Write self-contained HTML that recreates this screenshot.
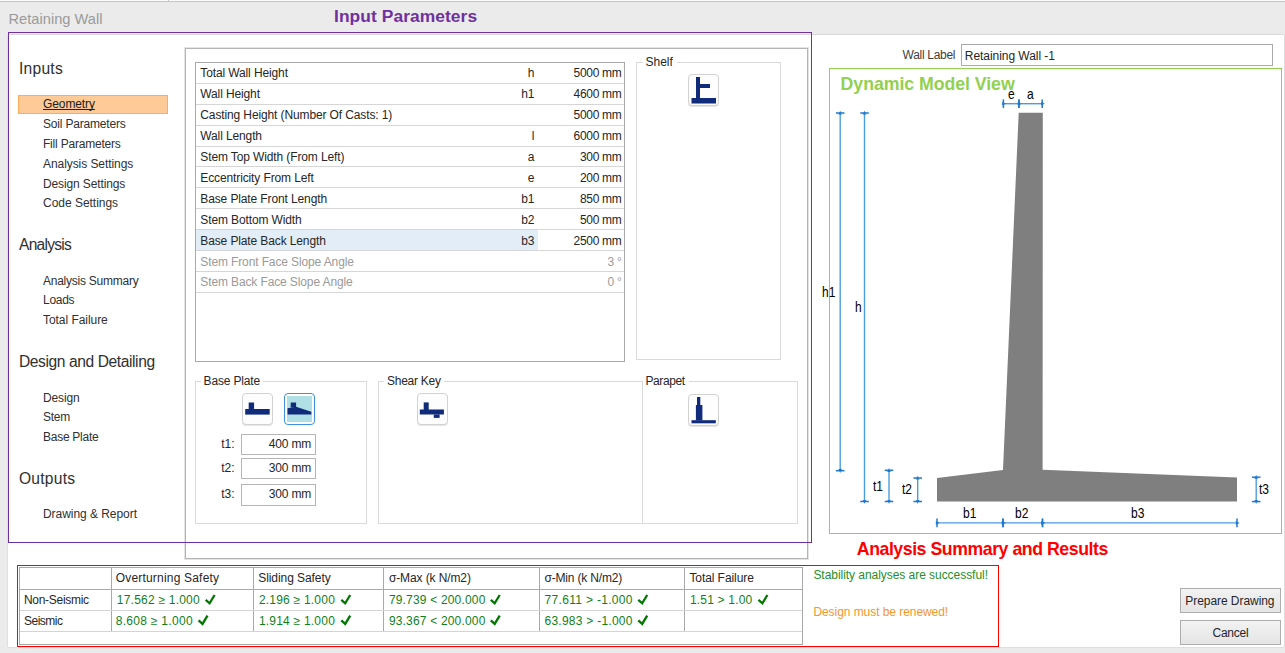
<!DOCTYPE html>
<html><head><meta charset="utf-8"><title>Retaining Wall</title>
<style>
html,body{margin:0;padding:0;}
body{width:1285px;height:653px;position:relative;overflow:hidden;background:#fff;font-family:"Liberation Sans", sans-serif;}
</style></head><body>
<div style="position:absolute;left:0px;top:0px;width:1285px;height:1px;background:#fbfbfb"></div>
<div style="position:absolute;left:0px;top:1px;width:1285px;height:1px;background:#c6c6c6"></div>
<div style="position:absolute;left:168px;top:0px;width:1px;height:1px;background:#c6c6c6"></div>
<div style="position:absolute;left:0px;top:2px;width:1285px;height:33px;background:#ebebeb"></div>
<div style="position:absolute;left:8px;top:34px;width:1276px;height:1px;background:#d9d9d9"></div>
<div style="position:absolute;left:0px;top:35px;width:8px;height:618px;background:#ebebeb"></div>
<div style="position:absolute;left:7px;top:35px;width:1px;height:612px;background:#e0e0e0"></div>
<div style="position:absolute;left:0px;top:647px;width:1285px;height:6px;background:#ebebeb"></div>
<div style="position:absolute;left:8px;top:647px;width:1276px;height:1px;background:#dedede"></div>
<div style="position:absolute;left:1284px;top:35px;width:1px;height:612px;background:#dcdcdc"></div>
<div style="position:absolute;left:8.50px;top:12px;font-size:14.6px;line-height:1;color:#9a9a9a;font-weight:400;white-space:pre;letter-spacing:0.038px;">Retaining Wall</div>
<div style="position:absolute;left:334.00px;top:8px;font-size:17.4px;line-height:1;color:#7030a0;font-weight:700;white-space:pre;letter-spacing:0.067px;">Input Parameters</div>
<div style="position:absolute;left:8px;top:32px;width:804px;height:511px;border:1px solid #7030a0;box-sizing:border-box;z-index:5"></div>
<div style="position:absolute;left:19.00px;top:61px;font-size:15.6px;line-height:1;color:#303030;font-weight:400;white-space:pre;letter-spacing:0.240px;">Inputs</div>
<div style="position:absolute;left:18px;top:95px;width:150px;height:19px;background:#fecb98;border:1px solid #ffac5a;box-sizing:border-box"></div>
<div style="position:absolute;left:43.00px;top:98px;font-size:12px;line-height:1;color:#202020;font-weight:400;white-space:pre;letter-spacing:-0.100px;text-decoration:underline;text-underline-offset:1px;text-decoration-skip-ink:none">Geometry</div>
<div style="position:absolute;left:43.00px;top:118px;font-size:12px;line-height:1;color:#303030;font-weight:400;white-space:pre;letter-spacing:-0.186px;">Soil Parameters</div>
<div style="position:absolute;left:43.00px;top:138px;font-size:12px;line-height:1;color:#303030;font-weight:400;white-space:pre;letter-spacing:-0.207px;">Fill Parameters</div>
<div style="position:absolute;left:43.00px;top:158px;font-size:12px;line-height:1;color:#303030;font-weight:400;white-space:pre;letter-spacing:-0.069px;">Analysis Settings</div>
<div style="position:absolute;left:43.00px;top:178px;font-size:12px;line-height:1;color:#303030;font-weight:400;white-space:pre;letter-spacing:-0.121px;">Design Settings</div>
<div style="position:absolute;left:43.00px;top:197px;font-size:12px;line-height:1;color:#303030;font-weight:400;white-space:pre;letter-spacing:-0.025px;">Code Settings</div>
<div style="position:absolute;left:19.00px;top:237px;font-size:15.6px;line-height:1;color:#303030;font-weight:400;white-space:pre;letter-spacing:-0.757px;">Analysis</div>
<div style="position:absolute;left:43.00px;top:275px;font-size:12px;line-height:1;color:#303030;font-weight:400;white-space:pre;letter-spacing:-0.247px;">Analysis Summary</div>
<div style="position:absolute;left:43.00px;top:294px;font-size:12px;line-height:1;color:#303030;font-weight:400;white-space:pre;letter-spacing:-0.275px;">Loads</div>
<div style="position:absolute;left:43.00px;top:314px;font-size:12px;line-height:1;color:#303030;font-weight:400;white-space:pre;letter-spacing:-0.050px;">Total Failure</div>
<div style="position:absolute;left:19.00px;top:354px;font-size:15.6px;line-height:1;color:#303030;font-weight:400;white-space:pre;letter-spacing:-0.411px;">Design and Detailing</div>
<div style="position:absolute;left:43.00px;top:392px;font-size:12px;line-height:1;color:#303030;font-weight:400;white-space:pre;letter-spacing:-0.140px;">Design</div>
<div style="position:absolute;left:43.00px;top:411px;font-size:12px;line-height:1;color:#303030;font-weight:400;white-space:pre;letter-spacing:-0.267px;">Stem</div>
<div style="position:absolute;left:43.00px;top:431px;font-size:12px;line-height:1;color:#303030;font-weight:400;white-space:pre;letter-spacing:-0.267px;">Base Plate</div>
<div style="position:absolute;left:19.00px;top:471px;font-size:15.6px;line-height:1;color:#303030;font-weight:400;white-space:pre;letter-spacing:0.233px;">Outputs</div>
<div style="position:absolute;left:43.00px;top:508px;font-size:12px;line-height:1;color:#303030;font-weight:400;white-space:pre;letter-spacing:-0.047px;">Drawing &amp; Report</div>
<div style="position:absolute;left:184px;top:47px;width:625px;height:513px;border:1px solid #e4e4e4;box-sizing:border-box"></div>
<div style="position:absolute;left:185px;top:48px;width:623px;height:511px;border:1px solid #b4b4b4;box-sizing:border-box"></div>
<div style="position:absolute;left:195px;top:62px;width:430px;height:300px;border:1px solid #a9a9a9;box-sizing:border-box;background:#fff"></div>
<div style="position:absolute;left:196px;top:83px;width:428px;height:1px;background:#d6d6d6"></div>
<div style="position:absolute;left:200.30px;top:67px;font-size:12px;line-height:1;color:#262626;font-weight:400;white-space:pre;letter-spacing:-0.12px">Total Wall Height</div>
<div style="position:absolute;left:134.50px;width:400px;text-align:right;top:67px;font-size:12px;line-height:1;color:#262626;font-weight:400;white-space:pre;">h</div>
<div style="position:absolute;left:221.50px;width:400px;text-align:right;top:67px;font-size:12px;line-height:1;color:#262626;font-weight:400;white-space:pre;letter-spacing:-0.3px">5000 mm</div>
<div style="position:absolute;left:196px;top:104px;width:428px;height:1px;background:#d6d6d6"></div>
<div style="position:absolute;left:200.30px;top:88px;font-size:12px;line-height:1;color:#262626;font-weight:400;white-space:pre;letter-spacing:-0.12px">Wall Height</div>
<div style="position:absolute;left:134.50px;width:400px;text-align:right;top:88px;font-size:12px;line-height:1;color:#262626;font-weight:400;white-space:pre;">h1</div>
<div style="position:absolute;left:221.50px;width:400px;text-align:right;top:88px;font-size:12px;line-height:1;color:#262626;font-weight:400;white-space:pre;letter-spacing:-0.3px">4600 mm</div>
<div style="position:absolute;left:196px;top:125px;width:428px;height:1px;background:#d6d6d6"></div>
<div style="position:absolute;left:200.30px;top:109px;font-size:12px;line-height:1;color:#262626;font-weight:400;white-space:pre;letter-spacing:-0.12px">Casting Height (Number Of Casts: 1)</div>
<div style="position:absolute;left:221.50px;width:400px;text-align:right;top:109px;font-size:12px;line-height:1;color:#262626;font-weight:400;white-space:pre;letter-spacing:-0.3px">5000 mm</div>
<div style="position:absolute;left:196px;top:146px;width:428px;height:1px;background:#d6d6d6"></div>
<div style="position:absolute;left:200.30px;top:130px;font-size:12px;line-height:1;color:#262626;font-weight:400;white-space:pre;letter-spacing:-0.12px">Wall Length</div>
<div style="position:absolute;left:134.50px;width:400px;text-align:right;top:130px;font-size:12px;line-height:1;color:#262626;font-weight:400;white-space:pre;">l</div>
<div style="position:absolute;left:221.50px;width:400px;text-align:right;top:130px;font-size:12px;line-height:1;color:#262626;font-weight:400;white-space:pre;letter-spacing:-0.3px">6000 mm</div>
<div style="position:absolute;left:196px;top:166px;width:428px;height:1px;background:#d6d6d6"></div>
<div style="position:absolute;left:200.30px;top:151px;font-size:12px;line-height:1;color:#262626;font-weight:400;white-space:pre;letter-spacing:-0.12px">Stem Top Width (From Left)</div>
<div style="position:absolute;left:134.50px;width:400px;text-align:right;top:151px;font-size:12px;line-height:1;color:#262626;font-weight:400;white-space:pre;">a</div>
<div style="position:absolute;left:221.50px;width:400px;text-align:right;top:151px;font-size:12px;line-height:1;color:#262626;font-weight:400;white-space:pre;letter-spacing:-0.3px">300 mm</div>
<div style="position:absolute;left:196px;top:187px;width:428px;height:1px;background:#d6d6d6"></div>
<div style="position:absolute;left:200.30px;top:172px;font-size:12px;line-height:1;color:#262626;font-weight:400;white-space:pre;letter-spacing:-0.12px">Eccentricity From Left</div>
<div style="position:absolute;left:134.50px;width:400px;text-align:right;top:172px;font-size:12px;line-height:1;color:#262626;font-weight:400;white-space:pre;">e</div>
<div style="position:absolute;left:221.50px;width:400px;text-align:right;top:172px;font-size:12px;line-height:1;color:#262626;font-weight:400;white-space:pre;letter-spacing:-0.3px">200 mm</div>
<div style="position:absolute;left:196px;top:208px;width:428px;height:1px;background:#d6d6d6"></div>
<div style="position:absolute;left:200.30px;top:193px;font-size:12px;line-height:1;color:#262626;font-weight:400;white-space:pre;letter-spacing:-0.12px">Base Plate Front Length</div>
<div style="position:absolute;left:134.50px;width:400px;text-align:right;top:193px;font-size:12px;line-height:1;color:#262626;font-weight:400;white-space:pre;">b1</div>
<div style="position:absolute;left:221.50px;width:400px;text-align:right;top:193px;font-size:12px;line-height:1;color:#262626;font-weight:400;white-space:pre;letter-spacing:-0.3px">850 mm</div>
<div style="position:absolute;left:196px;top:229px;width:428px;height:1px;background:#d6d6d6"></div>
<div style="position:absolute;left:200.30px;top:214px;font-size:12px;line-height:1;color:#262626;font-weight:400;white-space:pre;letter-spacing:-0.12px">Stem Bottom Width</div>
<div style="position:absolute;left:134.50px;width:400px;text-align:right;top:214px;font-size:12px;line-height:1;color:#262626;font-weight:400;white-space:pre;">b2</div>
<div style="position:absolute;left:221.50px;width:400px;text-align:right;top:214px;font-size:12px;line-height:1;color:#262626;font-weight:400;white-space:pre;letter-spacing:-0.3px">500 mm</div>
<div style="position:absolute;left:196px;top:230px;width:342px;height:20px;background:#e2edf8"></div>
<div style="position:absolute;left:196px;top:250px;width:428px;height:1px;background:#d6d6d6"></div>
<div style="position:absolute;left:200.30px;top:235px;font-size:12px;line-height:1;color:#262626;font-weight:400;white-space:pre;letter-spacing:-0.12px">Base Plate Back Length</div>
<div style="position:absolute;left:134.50px;width:400px;text-align:right;top:235px;font-size:12px;line-height:1;color:#262626;font-weight:400;white-space:pre;">b3</div>
<div style="position:absolute;left:221.50px;width:400px;text-align:right;top:235px;font-size:12px;line-height:1;color:#262626;font-weight:400;white-space:pre;letter-spacing:-0.3px">2500 mm</div>
<div style="position:absolute;left:196px;top:271px;width:428px;height:1px;background:#d6d6d6"></div>
<div style="position:absolute;left:200.30px;top:256px;font-size:12px;line-height:1;color:#9a9a9a;font-weight:400;white-space:pre;letter-spacing:-0.12px">Stem Front Face Slope Angle</div>
<div style="position:absolute;left:221.50px;width:400px;text-align:right;top:256px;font-size:12px;line-height:1;color:#9a9a9a;font-weight:400;white-space:pre;letter-spacing:-0.3px">3 °</div>
<div style="position:absolute;left:196px;top:292px;width:428px;height:1px;background:#d6d6d6"></div>
<div style="position:absolute;left:200.30px;top:276px;font-size:12px;line-height:1;color:#9a9a9a;font-weight:400;white-space:pre;letter-spacing:-0.12px">Stem Back Face Slope Angle</div>
<div style="position:absolute;left:221.50px;width:400px;text-align:right;top:276px;font-size:12px;line-height:1;color:#9a9a9a;font-weight:400;white-space:pre;letter-spacing:-0.3px">0 °</div>
<div style="position:absolute;left:636px;top:62px;width:145px;height:298px;border:1px solid #dadada;box-sizing:border-box"></div>
<div style="position:absolute;left:642.5px;top:61px;width:34.0px;height:3px;background:#fff"></div>
<div style="position:absolute;left:645.50px;top:56px;font-size:12px;line-height:1;color:#262626;font-weight:400;white-space:pre;">Shelf</div>
<div style="position:absolute;left:195px;top:381px;width:172px;height:143px;border:1px solid #dadada;box-sizing:border-box"></div>
<div style="position:absolute;left:200.6px;top:380px;width:62.50000000000003px;height:3px;background:#fff"></div>
<div style="position:absolute;left:203.60px;top:375px;font-size:12px;line-height:1;color:#262626;font-weight:400;white-space:pre;letter-spacing:-0.167px;">Base Plate</div>
<div style="position:absolute;left:378px;top:381px;width:265px;height:143px;border:1px solid #dadada;box-sizing:border-box"></div>
<div style="position:absolute;left:384px;top:380px;width:60px;height:3px;background:#fff"></div>
<div style="position:absolute;left:387.00px;top:375px;font-size:12px;line-height:1;color:#262626;font-weight:400;white-space:pre;letter-spacing:-0.250px;">Shear Key</div>
<div style="position:absolute;left:642px;top:381px;width:156px;height:143px;border:1px solid #dadada;box-sizing:border-box"></div>
<div style="position:absolute;left:642.5px;top:380px;width:46.5px;height:3px;background:#fff"></div>
<div style="position:absolute;left:645.50px;top:375px;font-size:12px;line-height:1;color:#262626;font-weight:400;white-space:pre;letter-spacing:-0.417px;">Parapet</div>
<div style="position:absolute;left:688px;top:74px;width:31px;height:32px;box-sizing:border-box;border:1px solid #d2d2d2;border-radius:4px;background:#fdfdfd;box-shadow:0 1px 0 #e6e6e6"></div>
<svg style="position:absolute;left:0;top:0" width="1285" height="653" viewBox="0 0 1285 653"><g fill="#0f2b7a"><rect x="696" y="77" width="4" height="22"/><rect x="700" y="84" width="10" height="4"/><rect x="691.5" y="98" width="24.5" height="5.5"/></g></svg>
<div style="position:absolute;left:242px;top:393px;width:31px;height:32px;box-sizing:border-box;border:1px solid #d2d2d2;border-radius:4px;background:#fdfdfd;box-shadow:0 1px 0 #e6e6e6"></div>
<svg style="position:absolute;left:0;top:0" width="1285" height="653" viewBox="0 0 1285 653"><g fill="#0f2b7a"><rect x="248.7" y="402.5" width="5.4" height="7"/><rect x="245.2" y="409" width="24.5" height="5.6"/></g></svg>
<div style="position:absolute;left:284px;top:393px;width:31px;height:32px;box-sizing:border-box;border:1.5px solid #3d8fe0;border-radius:4px;background:#fff"><div style="position:absolute;left:2px;top:2px;right:2px;bottom:2px;background:#b0e0e6"></div></div>
<svg style="position:absolute;left:0;top:0" width="1285" height="653" viewBox="0 0 1285 653"><g fill="#0f2b7a"><rect x="290.7" y="402.5" width="5.4" height="5"/><polygon points="287.5,408.2 296,406.7 311.3,411.8 311.3,414.5 287.5,414.5"/></g></svg>
<div style="position:absolute;left:417px;top:393px;width:31px;height:32px;box-sizing:border-box;border:1px solid #d2d2d2;border-radius:4px;background:#fdfdfd;box-shadow:0 1px 0 #e6e6e6"></div>
<svg style="position:absolute;left:0;top:0" width="1285" height="653" viewBox="0 0 1285 653"><g fill="#0f2b7a"><rect x="423.7" y="402.4" width="5" height="7.6"/><rect x="419.8" y="409.5" width="24.1" height="5"/><rect x="433.8" y="414.5" width="5.8" height="3.4"/></g></svg>
<div style="position:absolute;left:688px;top:394px;width:31px;height:32px;box-sizing:border-box;border:1px solid #d2d2d2;border-radius:4px;background:#fdfdfd;box-shadow:0 1px 0 #e6e6e6"></div>
<svg style="position:absolute;left:0;top:0" width="1285" height="653" viewBox="0 0 1285 653"><g fill="#0f2b7a"><rect x="697" y="397" width="3.3" height="8"/><rect x="695.9" y="405" width="6.5" height="15.5"/><rect x="691.5" y="420.2" width="24.3" height="3.1"/></g></svg>
<div style="position:absolute;left:241px;top:434px;width:75px;height:21px;border:1px solid #b5b5b5;box-sizing:border-box;background:#fff"></div>
<div style="position:absolute;left:-165.50px;width:400px;text-align:right;top:438px;font-size:12px;line-height:1;color:#262626;font-weight:400;white-space:pre;">t1:</div>
<div style="position:absolute;left:-89.00px;width:400px;text-align:right;top:438px;font-size:12px;line-height:1;color:#262626;font-weight:400;white-space:pre;letter-spacing:-0.2px">400 mm</div>
<div style="position:absolute;left:241px;top:458px;width:75px;height:21px;border:1px solid #b5b5b5;box-sizing:border-box;background:#fff"></div>
<div style="position:absolute;left:-165.50px;width:400px;text-align:right;top:462px;font-size:12px;line-height:1;color:#262626;font-weight:400;white-space:pre;">t2:</div>
<div style="position:absolute;left:-89.00px;width:400px;text-align:right;top:462px;font-size:12px;line-height:1;color:#262626;font-weight:400;white-space:pre;letter-spacing:-0.2px">300 mm</div>
<div style="position:absolute;left:241px;top:484px;width:75px;height:22px;border:1px solid #b5b5b5;box-sizing:border-box;background:#fff"></div>
<div style="position:absolute;left:-165.50px;width:400px;text-align:right;top:488px;font-size:12px;line-height:1;color:#262626;font-weight:400;white-space:pre;">t3:</div>
<div style="position:absolute;left:-89.00px;width:400px;text-align:right;top:488px;font-size:12px;line-height:1;color:#262626;font-weight:400;white-space:pre;letter-spacing:-0.2px">300 mm</div>
<div style="position:absolute;left:555.20px;width:400px;text-align:right;top:49px;font-size:12px;line-height:1;color:#404040;font-weight:400;white-space:pre;letter-spacing:-0.300px;">Wall Label</div>
<div style="position:absolute;left:961px;top:44px;width:312px;height:22px;border:1px solid #a9a9a9;box-sizing:border-box;background:#fff"></div>
<div style="position:absolute;left:964.80px;top:50px;font-size:12px;line-height:1;color:#262626;font-weight:400;white-space:pre;letter-spacing:-0.050px;">Retaining Wall -1</div>
<div style="position:absolute;left:829px;top:68px;width:453px;height:466px;border:1px solid #92d050;box-sizing:border-box"></div>
<div style="position:absolute;left:840.60px;top:76px;font-size:17.7px;line-height:1;color:#92d050;font-weight:700;white-space:pre;letter-spacing:-0.035px;">Dynamic Model View</div>
<svg style="position:absolute;left:0;top:0" width="1285" height="653" viewBox="0 0 1285 653"><polygon fill="#7f7f7f" points="1018.7,112.7 1042.8,112.7 1042.6,469.7 1237,477.5 1237,501.5 937,501.5 937,478 1003,470"/><line x1="840.2" y1="113" x2="840.2" y2="470.7" stroke="#4a9ddf" stroke-width="1.4"/><line x1="835.9000000000001" y1="113" x2="844.5" y2="113" stroke="#2079d0" stroke-width="1.5"/><polygon fill="#2079d0" points="838.4000000000001,114.6 840.2,110.8 842.0,114.6"/><line x1="835.9000000000001" y1="470.7" x2="844.5" y2="470.7" stroke="#2079d0" stroke-width="1.5"/><polygon fill="#2079d0" points="838.4000000000001,469.09999999999997 840.2,472.9 842.0,469.09999999999997"/><line x1="864.5" y1="113" x2="864.5" y2="501.5" stroke="#4a9ddf" stroke-width="1.4"/><line x1="860.2" y1="113" x2="868.8" y2="113" stroke="#2079d0" stroke-width="1.5"/><polygon fill="#2079d0" points="862.7,114.6 864.5,110.8 866.3,114.6"/><line x1="860.2" y1="501.5" x2="868.8" y2="501.5" stroke="#2079d0" stroke-width="1.5"/><polygon fill="#2079d0" points="862.7,499.9 864.5,503.7 866.3,499.9"/><line x1="889" y1="470.3" x2="889" y2="501.5" stroke="#4a9ddf" stroke-width="1.4"/><line x1="884.7" y1="470.3" x2="893.3" y2="470.3" stroke="#2079d0" stroke-width="1.5"/><polygon fill="#2079d0" points="887.2,471.90000000000003 889,468.1 890.8,471.90000000000003"/><line x1="884.7" y1="501.5" x2="893.3" y2="501.5" stroke="#2079d0" stroke-width="1.5"/><polygon fill="#2079d0" points="887.2,499.9 889,503.7 890.8,499.9"/><line x1="917.7" y1="478" x2="917.7" y2="501.5" stroke="#4a9ddf" stroke-width="1.4"/><line x1="913.4000000000001" y1="478" x2="922.0" y2="478" stroke="#2079d0" stroke-width="1.5"/><polygon fill="#2079d0" points="915.9000000000001,479.6 917.7,475.8 919.5,479.6"/><line x1="913.4000000000001" y1="501.5" x2="922.0" y2="501.5" stroke="#2079d0" stroke-width="1.5"/><polygon fill="#2079d0" points="915.9000000000001,499.9 917.7,503.7 919.5,499.9"/><line x1="1256.2" y1="477.2" x2="1256.2" y2="501.6" stroke="#4a9ddf" stroke-width="1.4"/><line x1="1251.9" y1="477.2" x2="1260.5" y2="477.2" stroke="#2079d0" stroke-width="1.5"/><polygon fill="#2079d0" points="1254.4,478.8 1256.2,475.0 1258.0,478.8"/><line x1="1251.9" y1="501.6" x2="1260.5" y2="501.6" stroke="#2079d0" stroke-width="1.5"/><polygon fill="#2079d0" points="1254.4,500.0 1256.2,503.8 1258.0,500.0"/><line x1="1003.4" y1="103.7" x2="1019" y2="103.7" stroke="#4a9ddf" stroke-width="1.4"/><line x1="1003.4" y1="99.4" x2="1003.4" y2="108.0" stroke="#2079d0" stroke-width="1.5"/><polygon fill="#2079d0" points="1002.1999999999999,101.9 1006.0,103.7 1002.1999999999999,105.5"/><line x1="1019" y1="99.4" x2="1019" y2="108.0" stroke="#2079d0" stroke-width="1.5"/><polygon fill="#2079d0" points="1017.8,101.9 1021.6,103.7 1017.8,105.5"/><line x1="1019" y1="103.7" x2="1042.2" y2="103.7" stroke="#4a9ddf" stroke-width="1.4"/><line x1="1019" y1="99.4" x2="1019" y2="108.0" stroke="#2079d0" stroke-width="1.5"/><polygon fill="#2079d0" points="1017.8,101.9 1021.6,103.7 1017.8,105.5"/><line x1="1042.2" y1="99.4" x2="1042.2" y2="108.0" stroke="#2079d0" stroke-width="1.5"/><polygon fill="#2079d0" points="1041.0,101.9 1044.8,103.7 1041.0,105.5"/><line x1="937" y1="522.9" x2="1003" y2="522.9" stroke="#4a9ddf" stroke-width="1.4"/><line x1="937" y1="518.6" x2="937" y2="527.1999999999999" stroke="#2079d0" stroke-width="1.5"/><polygon fill="#2079d0" points="935.8,521.1 939.6,522.9 935.8,524.6999999999999"/><line x1="1003" y1="518.6" x2="1003" y2="527.1999999999999" stroke="#2079d0" stroke-width="1.5"/><polygon fill="#2079d0" points="1001.8,521.1 1005.6,522.9 1001.8,524.6999999999999"/><line x1="1003" y1="522.9" x2="1042.5" y2="522.9" stroke="#4a9ddf" stroke-width="1.4"/><line x1="1003" y1="518.6" x2="1003" y2="527.1999999999999" stroke="#2079d0" stroke-width="1.5"/><polygon fill="#2079d0" points="1001.8,521.1 1005.6,522.9 1001.8,524.6999999999999"/><line x1="1042.5" y1="518.6" x2="1042.5" y2="527.1999999999999" stroke="#2079d0" stroke-width="1.5"/><polygon fill="#2079d0" points="1041.3,521.1 1045.1,522.9 1041.3,524.6999999999999"/><line x1="1042.5" y1="522.9" x2="1237" y2="522.9" stroke="#4a9ddf" stroke-width="1.4"/><line x1="1042.5" y1="518.6" x2="1042.5" y2="527.1999999999999" stroke="#2079d0" stroke-width="1.5"/><polygon fill="#2079d0" points="1041.3,521.1 1045.1,522.9 1041.3,524.6999999999999"/><line x1="1237" y1="518.6" x2="1237" y2="527.1999999999999" stroke="#2079d0" stroke-width="1.5"/><polygon fill="#2079d0" points="1235.8,521.1 1239.6,522.9 1235.8,524.6999999999999"/></svg>
<div style="position:absolute;left:821.80px;top:284px;font-size:15px;line-height:1;color:#000;font-weight:400;white-space:pre;transform:scaleX(0.8);transform-origin:0 0">h1</div>
<div style="position:absolute;left:854.70px;top:299px;font-size:15px;line-height:1;color:#000;font-weight:400;white-space:pre;transform:scaleX(0.8);transform-origin:0 0">h</div>
<div style="position:absolute;left:873.30px;top:478px;font-size:15px;line-height:1;color:#000;font-weight:400;white-space:pre;transform:scaleX(0.8);transform-origin:0 0">t1</div>
<div style="position:absolute;left:902.30px;top:481px;font-size:15px;line-height:1;color:#000;font-weight:400;white-space:pre;transform:scaleX(0.8);transform-origin:0 0">t2</div>
<div style="position:absolute;left:1258.50px;top:481px;font-size:15px;line-height:1;color:#000;font-weight:400;white-space:pre;transform:scaleX(0.8);transform-origin:0 0">t3</div>
<div style="position:absolute;left:962.80px;top:505px;font-size:15px;line-height:1;color:#000;font-weight:400;white-space:pre;transform:scaleX(0.8);transform-origin:0 0">b1</div>
<div style="position:absolute;left:1014.90px;top:505px;font-size:15px;line-height:1;color:#000;font-weight:400;white-space:pre;transform:scaleX(0.8);transform-origin:0 0">b2</div>
<div style="position:absolute;left:1131.40px;top:505px;font-size:15px;line-height:1;color:#000;font-weight:400;white-space:pre;transform:scaleX(0.8);transform-origin:0 0">b3</div>
<div style="position:absolute;left:1008.00px;top:86px;font-size:15px;line-height:1;color:#000;font-weight:400;white-space:pre;transform:scaleX(0.8);transform-origin:0 0">e</div>
<div style="position:absolute;left:1026.90px;top:86px;font-size:15px;line-height:1;color:#000;font-weight:400;white-space:pre;transform:scaleX(0.8);transform-origin:0 0">a</div>
<div style="position:absolute;left:856.80px;top:541px;font-size:17.7px;line-height:1;color:#ff0000;font-weight:700;white-space:pre;letter-spacing:-0.444px;">Analysis Summary and Results</div>
<div style="position:absolute;left:17px;top:565px;width:982px;height:82px;border:1px solid #ff0000;box-sizing:border-box"></div>
<div style="position:absolute;left:19px;top:567px;width:784px;height:78px;border:1px solid #a9a9a9;box-sizing:border-box"></div>
<div style="position:absolute;left:111px;top:568px;width:1px;height:63px;background:#a9a9a9"></div>
<div style="position:absolute;left:253px;top:568px;width:1px;height:63px;background:#a9a9a9"></div>
<div style="position:absolute;left:383px;top:568px;width:1px;height:63px;background:#a9a9a9"></div>
<div style="position:absolute;left:539px;top:568px;width:1px;height:63px;background:#a9a9a9"></div>
<div style="position:absolute;left:684px;top:568px;width:1px;height:63px;background:#a9a9a9"></div>
<div style="position:absolute;left:20px;top:589px;width:782px;height:1px;background:#a9a9a9"></div>
<div style="position:absolute;left:20px;top:610px;width:782px;height:1px;background:#d4d4d4"></div>
<div style="position:absolute;left:20px;top:631px;width:782px;height:1px;background:#d4d4d4"></div>
<div style="position:absolute;left:115.70px;top:572px;font-size:12px;line-height:1;color:#262626;font-weight:400;white-space:pre;letter-spacing:0.194px;">Overturning Safety</div>
<div style="position:absolute;left:258.20px;top:572px;font-size:12px;line-height:1;color:#262626;font-weight:400;white-space:pre;letter-spacing:-0.062px;">Sliding Safety</div>
<div style="position:absolute;left:388.90px;top:572px;font-size:12px;line-height:1;color:#262626;font-weight:400;white-space:pre;letter-spacing:-0.108px;">σ-Max (k N/m2)</div>
<div style="position:absolute;left:544.50px;top:572px;font-size:12px;line-height:1;color:#262626;font-weight:400;white-space:pre;letter-spacing:-0.177px;">σ-Min (k N/m2)</div>
<div style="position:absolute;left:689.40px;top:572px;font-size:12px;line-height:1;color:#262626;font-weight:400;white-space:pre;letter-spacing:-0.075px;">Total Failure</div>
<div style="position:absolute;left:24.00px;top:594px;font-size:12px;line-height:1;color:#262626;font-weight:400;white-space:pre;letter-spacing:-0.300px;">Non-Seismic</div>
<div style="position:absolute;left:24.00px;top:615px;font-size:12px;line-height:1;color:#262626;font-weight:400;white-space:pre;letter-spacing:-0.500px;">Seismic</div>
<div style="position:absolute;left:116.80px;top:594px;font-size:12px;line-height:1;color:#0f7f1a;font-weight:400;white-space:pre;letter-spacing:0.223px;">17.562 ≥ 1.000</div>
<div style="position:absolute;left:258.90px;top:594px;font-size:12px;line-height:1;color:#0f7f1a;font-weight:400;white-space:pre;letter-spacing:0.217px;">2.196 ≥ 1.000</div>
<div style="position:absolute;left:388.90px;top:594px;font-size:12px;line-height:1;color:#0f7f1a;font-weight:400;white-space:pre;letter-spacing:0.180px;">79.739 &lt; 200.000</div>
<div style="position:absolute;left:544.50px;top:594px;font-size:12px;line-height:1;color:#0f7f1a;font-weight:400;white-space:pre;letter-spacing:0.321px;">77.611 &gt; -1.000</div>
<div style="position:absolute;left:690.00px;top:594px;font-size:12px;line-height:1;color:#0f7f1a;font-weight:400;white-space:pre;letter-spacing:0.180px;">1.51 &gt; 1.00</div>
<div style="position:absolute;left:115.70px;top:615px;font-size:12px;line-height:1;color:#0f7f1a;font-weight:400;white-space:pre;letter-spacing:0.300px;">8.608 ≥ 1.000</div>
<div style="position:absolute;left:258.90px;top:615px;font-size:12px;line-height:1;color:#0f7f1a;font-weight:400;white-space:pre;letter-spacing:0.217px;">1.914 ≥ 1.000</div>
<div style="position:absolute;left:388.90px;top:615px;font-size:12px;line-height:1;color:#0f7f1a;font-weight:400;white-space:pre;letter-spacing:0.180px;">93.367 &lt; 200.000</div>
<div style="position:absolute;left:544.50px;top:615px;font-size:12px;line-height:1;color:#0f7f1a;font-weight:400;white-space:pre;letter-spacing:0.250px;">63.983 &gt; -1.000</div>
<svg style="position:absolute;left:0;top:0" width="1285" height="653" viewBox="0 0 1285 653"><polyline fill="none" stroke="#007800" stroke-width="2.3" points="205.70000000000002,599.8 209.6,603.3 214.6,595.0"/><polyline fill="none" stroke="#007800" stroke-width="2.3" points="341.3,599.8 345.2,603.3 350.2,595.0"/><polyline fill="none" stroke="#007800" stroke-width="2.3" points="490.8,599.8 494.7,603.3 499.7,595.0"/><polyline fill="none" stroke="#007800" stroke-width="2.3" points="638.3,599.8 642.2,603.3 647.2,595.0"/><polyline fill="none" stroke="#007800" stroke-width="2.3" points="758.5,599.8 762.4000000000001,603.3 767.4000000000001,595.0"/><polyline fill="none" stroke="#007800" stroke-width="2.3" points="198.60000000000002,620.4 202.5,623.9 207.5,615.6"/><polyline fill="none" stroke="#007800" stroke-width="2.3" points="341.3,620.4 345.2,623.9 350.2,615.6"/><polyline fill="none" stroke="#007800" stroke-width="2.3" points="490.8,620.4 494.7,623.9 499.7,615.6"/><polyline fill="none" stroke="#007800" stroke-width="2.3" points="638.3,620.4 642.2,623.9 647.2,615.6"/></svg>
<div style="position:absolute;left:813.40px;top:569px;font-size:12px;line-height:1;color:#1f8f2a;font-weight:400;white-space:pre;letter-spacing:-0.045px;">Stability analyses are successful!</div>
<div style="position:absolute;left:813.40px;top:606px;font-size:12px;line-height:1;color:#f5962a;font-weight:400;white-space:pre;letter-spacing:-0.059px;">Design must be renewed!</div>
<div style="position:absolute;left:1180px;top:588px;width:101px;height:25px;border:1px solid #adadad;box-sizing:border-box;background:linear-gradient(#f2f2f2,#e5e5e5)"></div>
<div style="position:absolute;left:1185.30px;top:595px;font-size:12px;line-height:1;color:#262626;font-weight:400;white-space:pre;letter-spacing:-0.057px;">Prepare Drawing</div>
<div style="position:absolute;left:1180px;top:620px;width:101px;height:25px;border:1px solid #adadad;box-sizing:border-box;background:linear-gradient(#f2f2f2,#e5e5e5)"></div>
<div style="position:absolute;left:1212.60px;top:627px;font-size:12px;line-height:1;color:#262626;font-weight:400;white-space:pre;letter-spacing:-0.280px;">Cancel</div>
</body></html>
